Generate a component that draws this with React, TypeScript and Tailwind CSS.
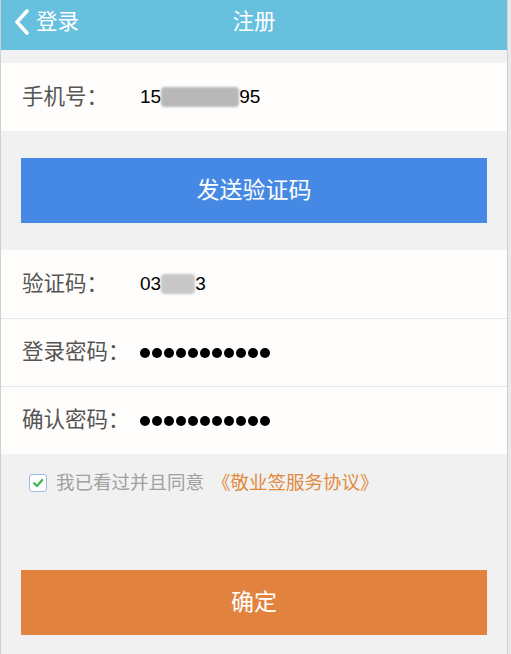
import React from "react";

const font = { fontFamily: '"Liberation Sans", "Noto Sans CJK SC", sans-serif' };

function Dots() {
  return (
    <div className="flex gap-[2px]">
      {Array.from({ length: 11 }).map((_, i) => (
        <div key={i} className="w-[10px] h-[10px] rounded-full bg-black" />
      ))}
    </div>
  );
}

function Row({ label, children, border }: { label: string; children: React.ReactNode; border?: boolean }) {
  return (
    <div className={`h-[68px] flex items-center pl-[21px] ${border ? "border-t border-[#e6e6e6]" : ""}`}>
      <div className="w-[118px] text-[21.5px] text-[#555]">{label}</div>
      <div className="text-[19px] text-black flex items-center">{children}</div>
    </div>
  );
}

export default function App() {
  return (
    <div className="w-[511px] h-[654px] flex bg-[#e9e9e9] overflow-hidden" style={font}>
      <div className="w-[508px] h-full flex flex-col bg-[#f1f1f1] border-l border-r border-[#d0d0d0]">
        <div className="h-[50px] bg-[#67c0de] relative flex items-center justify-center">
          <div className="absolute left-[12px] top-0 h-[44px] flex items-center text-white text-[21.5px]">
            <svg width="18" height="26" viewBox="0 0 18 26" className="mr-[5px]">
              <path d="M14 2 L4 13 L14 24" stroke="white" strokeWidth="3.6" fill="none" strokeLinecap="round" strokeLinejoin="round" />
            </svg>
            登录
          </div>
          <div className="text-white text-[21.5px] -mt-[6px]">注册</div>
        </div>
        <div className="h-[13px]" />
        <div className="bg-[#fefdfb]">
          <Row label="手机号：">
            <span>15</span>
            <span className="inline-block w-[78px] h-[20px] bg-[#b8b8b8] blur-[1px] rounded-sm" />
            <span>95</span>
          </Row>
        </div>
        <div className="px-[20px] pt-[27px] pb-[27px]">
          <button className="w-full h-[65px] bg-[#4689e4] text-white text-[23px]">发送验证码</button>
        </div>
        <div className="bg-[#fefdfb]">
          <Row label="验证码：">
            <span>03</span>
            <span className="inline-block w-[34px] h-[20px] bg-[#c8c8c8] blur-[1px] rounded-sm" />
            <span>3</span>
          </Row>
          <Row label="登录密码：" border>
            <Dots />
          </Row>
          <Row label="确认密码：" border>
            <Dots />
          </Row>
        </div>
        <div className="flex items-center pl-[28px] pt-[4px] h-[54px]">
          <div className="w-[18px] h-[18px] border border-[#9fb8e0] rounded-[3px] bg-white flex items-center justify-center">
            <svg width="12" height="12" viewBox="0 0 12 12">
              <path d="M2 6.2 L5 9 L10.2 3" stroke="#3fb34f" strokeWidth="2.2" fill="none" strokeLinecap="round" strokeLinejoin="round" />
            </svg>
          </div>
          <span className="ml-[9px] text-[18.5px] text-[#a0a0a0]">我已看过并且同意</span>
          <span className="ml-[8px] text-[18.5px] text-[#e08a3e]">《敬业签服务协议》</span>
        </div>
        <div className="flex-1" />
        <div className="px-[20px] pb-[19px]">
          <button className="w-full h-[65px] bg-[#e1833f] text-white text-[23px]">确定</button>
        </div>
      </div>
    </div>
  );
}
